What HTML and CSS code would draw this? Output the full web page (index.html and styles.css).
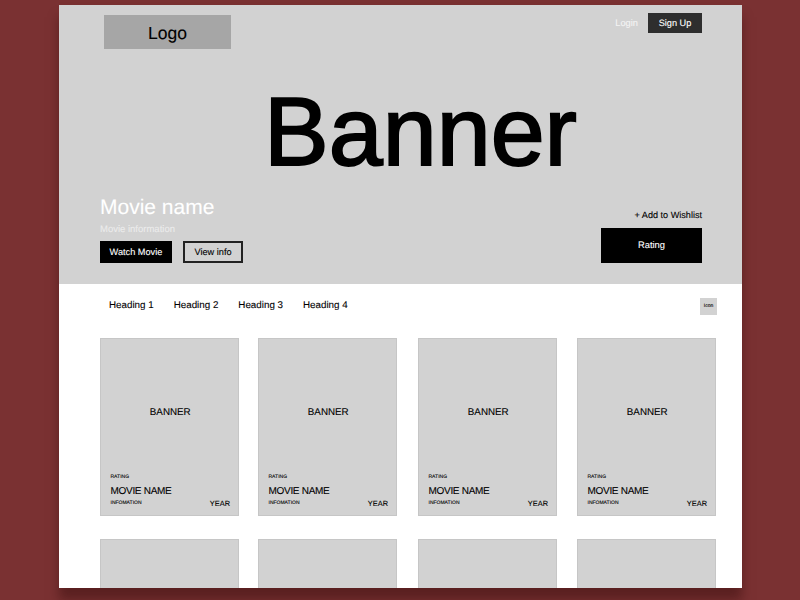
FILE: index.html
```html
<!DOCTYPE html>
<html lang="en">
<head>
    <meta charset="UTF-8">
    <meta name="viewport" content="width=device-width, initial-scale=1.0">
    <title>Movies</title>
    <link rel="stylesheet" href="styles.css">
</head>
<body>
    <div class="page">
        <header class="hero">
            <div class="topbar">
                <div class="logo">Logo</div>
                <div class="auth">
                    <a class="login" href="#login">Login</a>
                    <a class="signup" href="#signup">Sign Up</a>
                </div>
            </div>
            <h1 class="banner-title">Banner</h1>
            <div class="hero-bottom">
                <div class="movie-info">
                    <h2>Movie name</h2>
                    <p>Movie information</p>
                    <div class="actions">
                        <a class="btn btn-dark" href="#watch">Watch Movie</a>
                        <a class="btn btn-outline" href="#info">View info</a>
                    </div>
                </div>
                <div class="rating-box">
                    <a class="wishlist" href="#wishlist">+ Add to Wishlist</a>
                    <div class="rating">Rating</div>
                </div>
            </div>
        </header>

        <nav class="tabs">
            <ul>
                <li>Heading 1</li>
                <li>Heading 2</li>
                <li>Heading 3</li>
                <li>Heading 4</li>
            </ul>
            <div class="icon-box">Icon</div>
        </nav>

        <section class="cards">
            <div class="card">
                <div class="card-banner">BANNER</div>
                <div class="card-rating">RATING</div>
                <div class="card-name">MOVIE NAME</div>
                <div class="card-foot"><span class="card-info">INFOMATION</span><span class="card-year">YEAR</span></div>
            </div>
            <div class="card">
                <div class="card-banner">BANNER</div>
                <div class="card-rating">RATING</div>
                <div class="card-name">MOVIE NAME</div>
                <div class="card-foot"><span class="card-info">INFOMATION</span><span class="card-year">YEAR</span></div>
            </div>
            <div class="card">
                <div class="card-banner">BANNER</div>
                <div class="card-rating">RATING</div>
                <div class="card-name">MOVIE NAME</div>
                <div class="card-foot"><span class="card-info">INFOMATION</span><span class="card-year">YEAR</span></div>
            </div>
            <div class="card">
                <div class="card-banner">BANNER</div>
                <div class="card-rating">RATING</div>
                <div class="card-name">MOVIE NAME</div>
                <div class="card-foot"><span class="card-info">INFOMATION</span><span class="card-year">YEAR</span></div>
            </div>
            <div class="card"></div>
            <div class="card"></div>
            <div class="card"></div>
            <div class="card"></div>
        </section>
    </div>
</body>
</html>
```

FILE: styles.css
```css
html, body {
    height: 100%;
}
body {
    margin: 0;
    padding: 5px 58px 0 59px;
    box-sizing: border-box;
    overflow: hidden;
    font-family: "Liberation Sans", Arial, sans-serif;
    color: #000;
    background-color: #7a3132;
    text-rendering: geometricPrecision;
    -webkit-text-stroke: 0.1px;
}
a {
    text-decoration: none;
    color: inherit;
}
.page {
    height: 583px;
    overflow: hidden;
    background-color: #fff;
    box-shadow: 0 12px 10px rgba(60, 15, 15, 0.5);
}
.hero {
    height: 279px;
    box-sizing: border-box;
    padding: 8px 40px 0 41px;
    background-color: #d2d2d2;
}
.topbar {
    display: flex;
    justify-content: space-between;
    align-items: flex-start;
    padding-left: 4px;
}
.logo {
    width: 127px;
    height: 34px;
    margin-top: 2px;
    line-height: 36px;
    text-align: center;
    font-size: 17.5px;
    background-color: #a6a6a6;
}
.auth {
    display: flex;
    align-items: center;
    gap: 10px;
}
.login {
    color: #f4f4f4;
    font-size: 9.3px;
}
.signup {
    width: 54px;
    height: 20px;
    line-height: 20px;
    text-align: center;
    font-size: 9.2px;
    color: #fff;
    background-color: #2e2e2e;
}
.banner-title {
    height: 122px;
    margin: 23px 0 0 39px;
    line-height: 119px;
    text-align: center;
    font-size: 97px;
    font-weight: normal;
    -webkit-text-stroke: 2px;
}
.hero-bottom {
    display: flex;
    justify-content: space-between;
    align-items: flex-end;
}
.movie-info h2 {
    margin: 2px 0 0;
    font-size: 21px;
    font-weight: normal;
    line-height: 24px;
    color: #fff;
}
.movie-info p {
    margin: 4px 0 5px;
    font-size: 9.5px;
    line-height: 12px;
    color: #ececec;
}
.actions {
    display: flex;
    align-items: flex-start;
    gap: 11px;
}
.btn {
    box-sizing: border-box;
    height: 22px;
    line-height: 23px;
    text-align: center;
    font-size: 9.2px;
}
.btn-dark {
    width: 72px;
    color: #fff;
    background-color: #000;
}
.btn-outline {
    width: 60px;
    line-height: 19px;
    border: 2px solid #222;
}
.rating-box {
    display: flex;
    flex-direction: column;
    align-items: flex-end;
}
.wishlist {
    font-size: 9.1px;
    line-height: 12px;
    margin-bottom: 7px;
}
.rating {
    width: 101px;
    height: 35px;
    line-height: 35px;
    text-align: center;
    font-size: 9.3px;
    color: #fff;
    background-color: #000;
}
.tabs {
    display: flex;
    justify-content: space-between;
    align-items: flex-start;
    height: 54px;
    padding: 15px 25px 0 50px;
    box-sizing: border-box;
}
.tabs ul {
    display: flex;
    gap: 20px;
    list-style: none;
    margin: 0;
    padding: 0;
    font-size: 9.8px;
    line-height: 13px;
}
.icon-box {
    width: 17px;
    height: 17px;
    margin-top: -1px;
    line-height: 17px;
    text-align: center;
    font-size: 5px;
    background-color: #d2d2d2;
}
.cards {
    display: grid;
    grid-template-columns: 158px 160px 159px 139px;
    row-gap: 23px;
    padding-left: 41px;
}
.card {
    box-sizing: border-box;
    width: 139px;
    height: 178px;
    padding: 0 8px 0 9.5px;
    background-color: #d2d2d2;
    border: 1px solid #c6c6c6;
}
.card-banner {
    height: 134px;
    padding-top: 67px;
    box-sizing: border-box;
    text-align: center;
    font-size: 9.8px;
    line-height: 13px;
}
.card-rating {
    font-size: 5px;
    line-height: 8px;
}
.card-name {
    margin-top: 4px;
    font-size: 10px;
    letter-spacing: -0.3px;
    line-height: 13px;
}
.card-foot {
    display: flex;
    justify-content: space-between;
    align-items: center;
    margin-top: 0;
    line-height: 11px;
}
.card-info {
    font-size: 5px;
}
.card-year {
    font-size: 7.4px;
}
```
